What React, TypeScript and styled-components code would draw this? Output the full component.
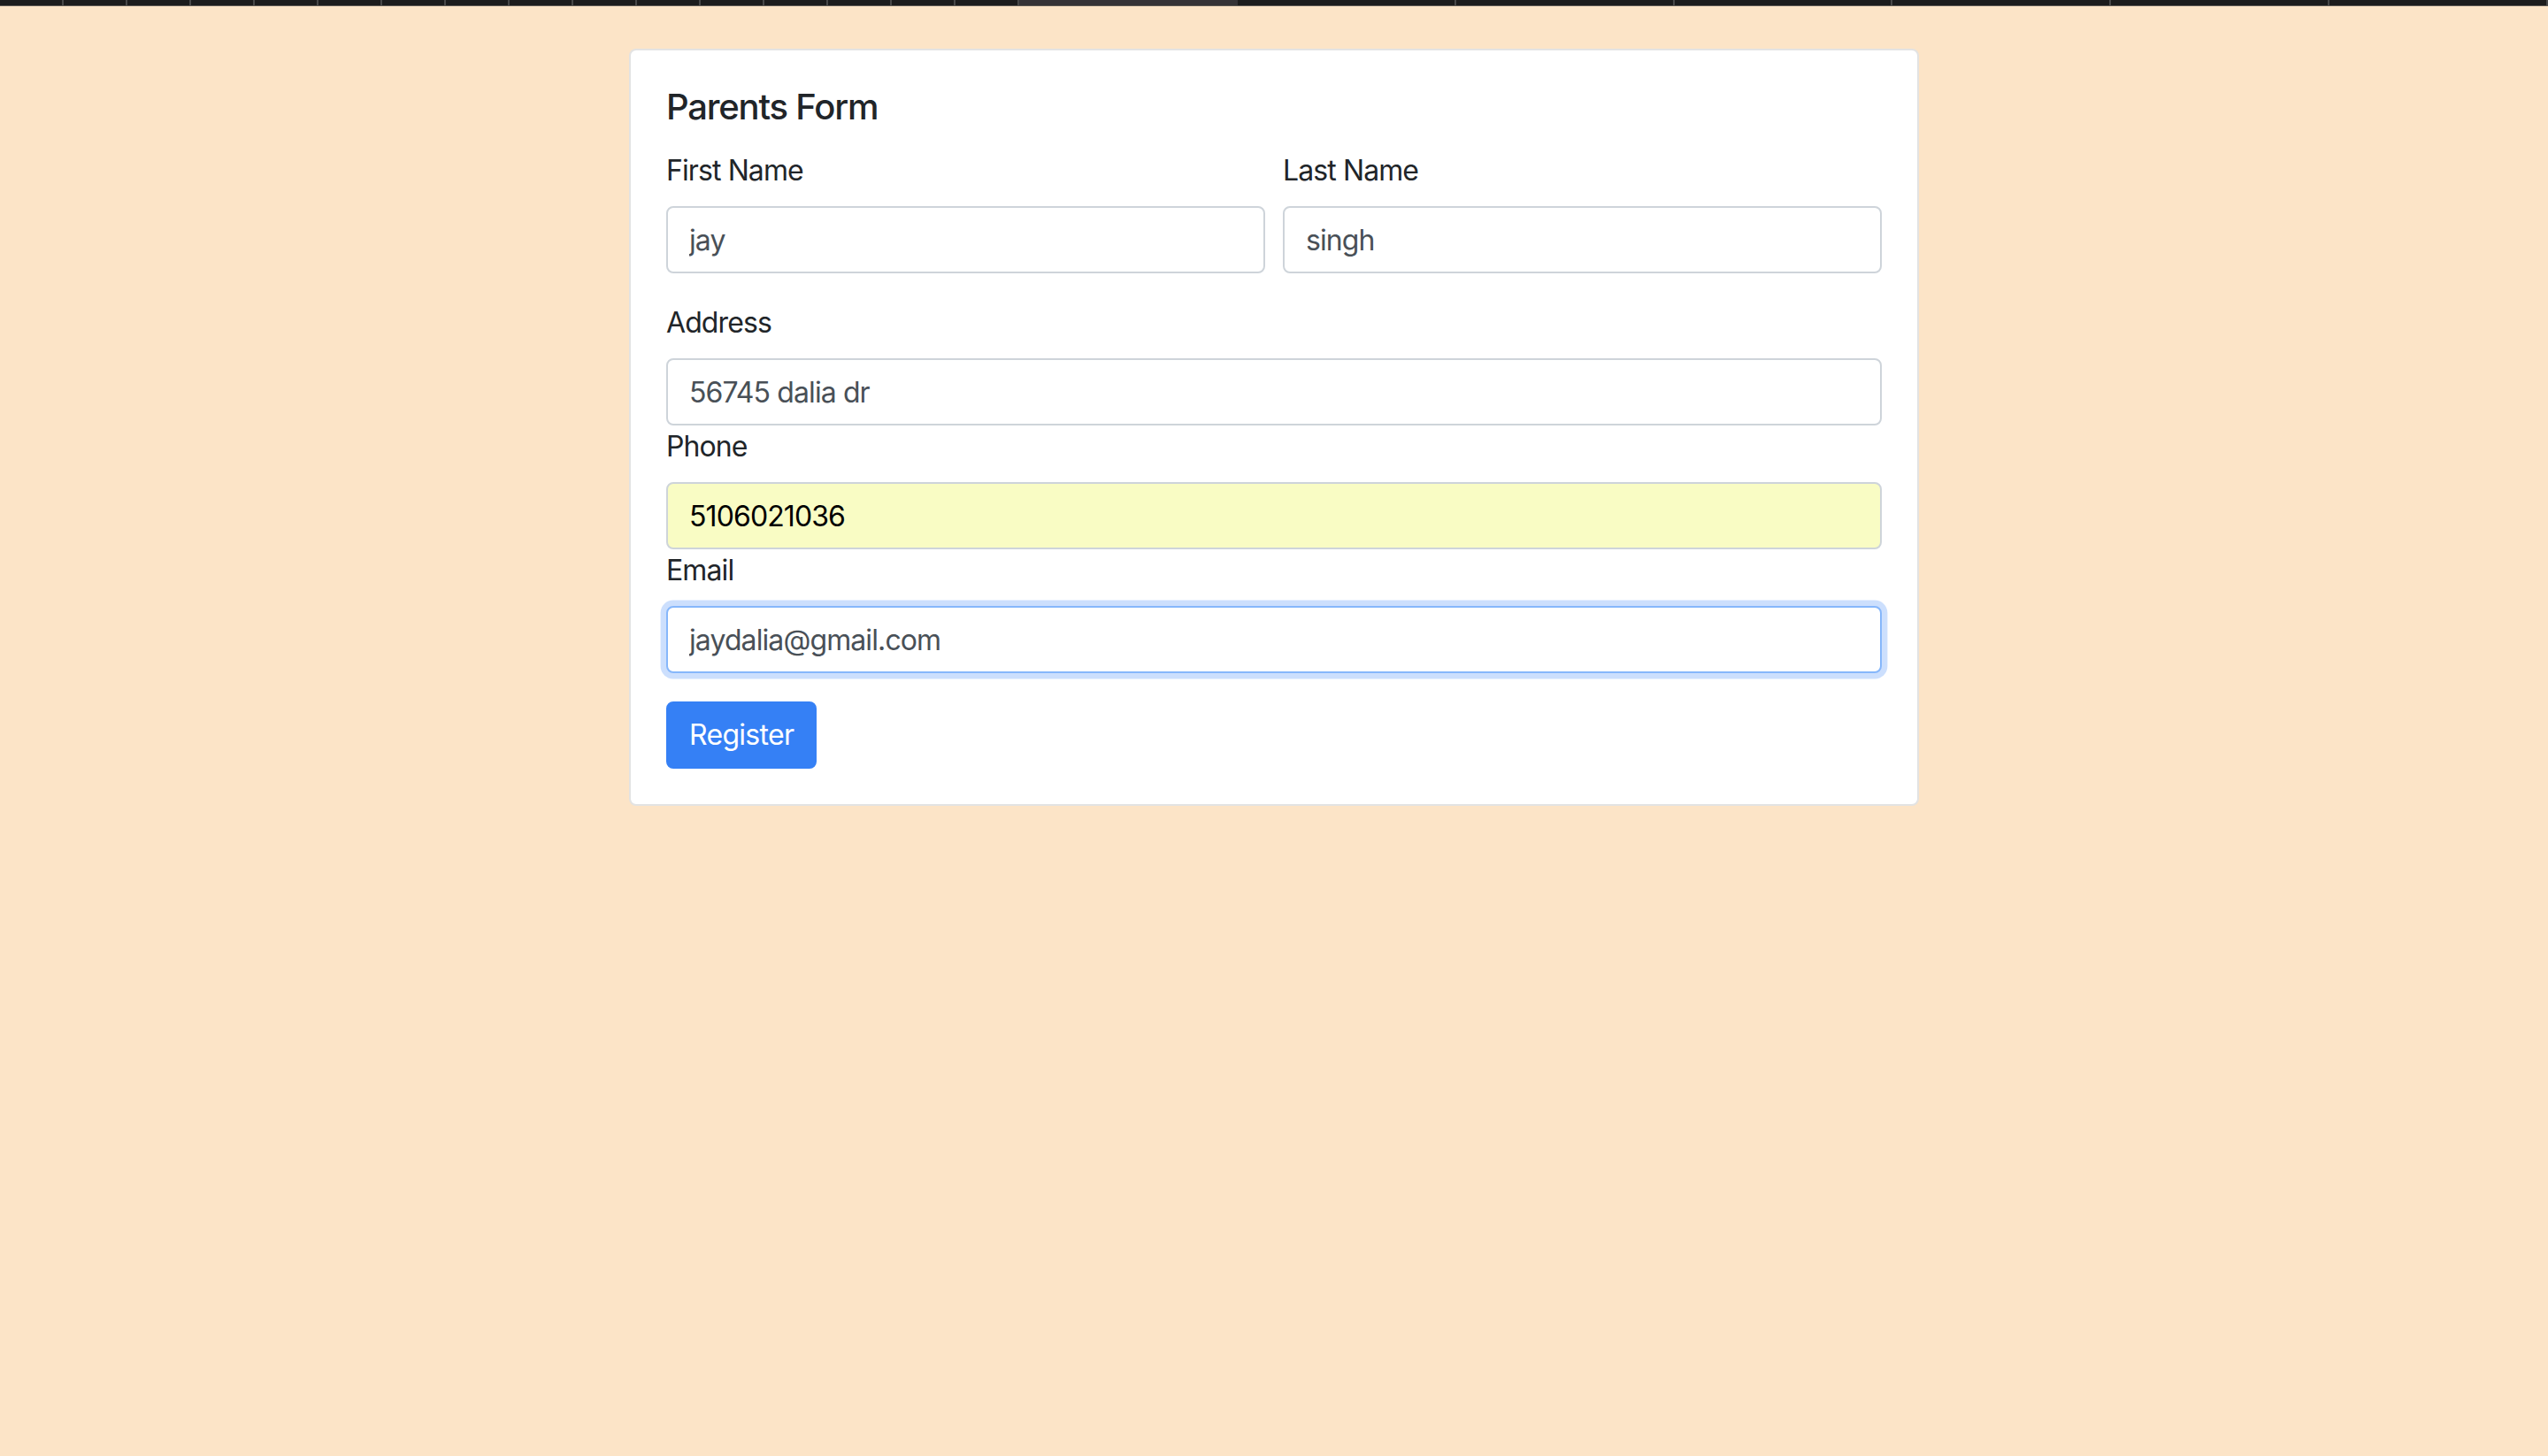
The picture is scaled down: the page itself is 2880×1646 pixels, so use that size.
import React from "react";
import styled, { createGlobalStyle } from "styled-components";

const GlobalStyle = createGlobalStyle`
  html, body {
    margin: 0;
    padding: 0;
    background: #fce4c7;
  }
  body {
    font-family: Inter, "Noto Sans", "Liberation Sans", sans-serif;
    color: #212529;
  }
  * { box-sizing: border-box; }
`;

const Page = styled.div`
  min-height: 1646px;
  background: #fce4c7;
  display: flex;
  flex-direction: column;
`;

const TabStrip = styled.div`
  height: 6px;
  display: flex;
  background: #1c1c1c;
  border-bottom: 1px solid #5a5650;
  box-sizing: content-box;
`;

const Tab = styled.div<{ $wide?: boolean; $active?: boolean }>`
  flex: ${(p) => (p.$wide ? "1 1 0" : "0 0 72px")};
  height: 6px;
  background: ${(p) => (p.$active ? "#353336" : "#1c1c1c")};
  border-right: 2px solid ${(p) => (p.$active ? "#353336" : "#484848")};
`;

const Card = styled.div`
  width: 1458px;
  margin: 48px auto 0;
  background: #ffffff;
  border: 2px solid rgba(0, 0, 0, 0.11);
  border-radius: 8px;
  padding: 40px;
  display: flex;
  flex-direction: column;
`;

const Title = styled.h5`
  margin: 0 0 24px;
  font-size: 40px;
  line-height: 48px;
  font-weight: 500;
  color: #212529;
  letter-spacing: -1.2px;
`;

const Row = styled.div`
  display: grid;
  grid-template-columns: 1fr 1fr;
  column-gap: 20px;
`;

const Group = styled.div<{ $spaced?: boolean }>`
  display: flex;
  flex-direction: column;
  margin-bottom: ${(p) => (p.$spaced ? "32px" : "0")};
`;

const Label = styled.label`
  font-size: 32px;
  line-height: 48px;
  margin-bottom: 16px;
  color: #212529;
  letter-spacing: -0.9px;
`;

const Input = styled.input<{ $autofill?: boolean; $focused?: boolean }>`
  display: block;
  width: 100%;
  height: 76px;
  padding: 12px 24px;
  font-family: Inter, "Noto Sans", "Liberation Sans", sans-serif;
  font-size: 32px;
  line-height: 48px;
  letter-spacing: -0.9px;
  color: ${(p) => (p.$autofill ? "#000000" : "#495057")};
  background: ${(p) => (p.$autofill ? "#f9fcc4" : "#ffffff")};
  border: 2px solid ${(p) => (p.$focused ? "#86b7fb" : "#ced4da")};
  border-radius: 8px;
  outline: none;
  box-shadow: ${(p) =>
    p.$focused ? "0 0 0 6.4px rgba(51, 129, 246, 0.25)" : "none"};
`;

const Button = styled.button`
  align-self: flex-start;
  height: 76px;
  padding: 12px 24px;
  font-family: Inter, "Noto Sans", "Liberation Sans", sans-serif;
  font-size: 32px;
  line-height: 48px;
  letter-spacing: -0.7px;
  color: #ffffff;
  background: #3580f5;
  border: 2px solid #3580f5;
  border-radius: 8px;
  cursor: pointer;
`;

export default function App() {
  const narrow = Array.from({ length: 16 });
  const wide = Array.from({ length: 7 });
  return (
    <>
      <GlobalStyle />
      <Page>
        <TabStrip>
          {narrow.map((_, i) => (
            <Tab key={"n" + i} />
          ))}
          {wide.map((_, i) => (
            <Tab key={"w" + i} $wide $active={i === 0} />
          ))}
        </TabStrip>
        <Card>
          <Title>Parents Form</Title>
          <Row>
            <Group $spaced>
              <Label>First Name</Label>
              <Input defaultValue="jay" />
            </Group>
            <Group $spaced>
              <Label>Last Name</Label>
              <Input defaultValue="singh" />
            </Group>
          </Row>
          <Group>
            <Label>Address</Label>
            <Input defaultValue="56745 dalia dr" />
          </Group>
          <Group>
            <Label>Phone</Label>
            <Input $autofill defaultValue="5106021036" />
          </Group>
          <Group $spaced>
            <Label>Email</Label>
            <Input $focused defaultValue="jaydalia@gmail.com" />
          </Group>
          <Button type="button">Register</Button>
        </Card>
      </Page>
    </>
  );
}
